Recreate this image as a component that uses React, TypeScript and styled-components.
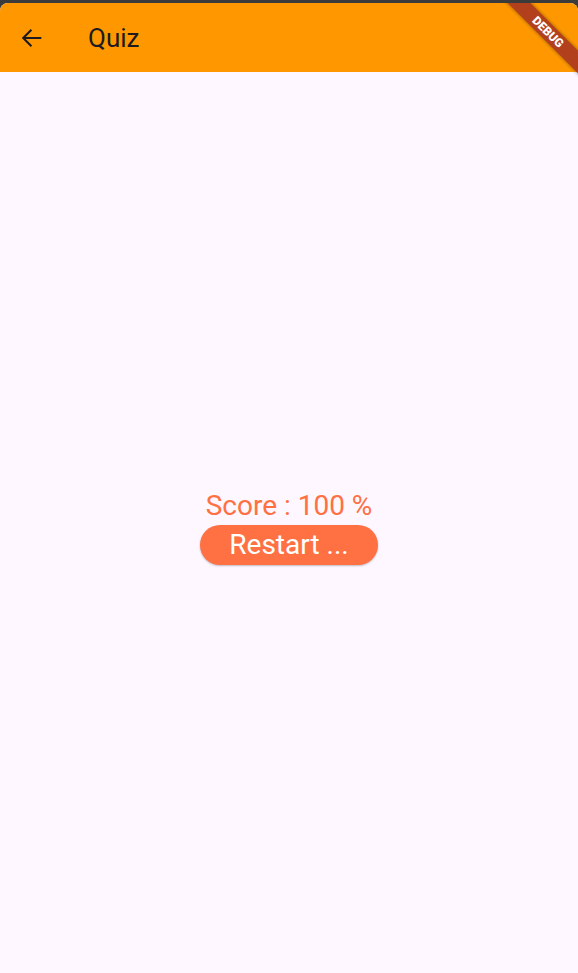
import styled, {createGlobalStyle} from "styled-components";

const Global = createGlobalStyle`
    html, body {
        margin: 0;
        padding: 0;
        background-color: #3b3b3b;
        font-family: Roboto, "Noto Sans", sans-serif;
    }
`;

const Screen = styled.div`
    margin-top: 3px;
    height: 970px;
    background-color: #fef7ff;
    border-radius: 8px 8px 0 0;
    overflow: hidden;
    position: relative;
    display: flex;
    flex-direction: column;
`;

const AppBar = styled.header`
    height: 69px;
    background-color: #ff9800;
    display: flex;
    align-items: center;
    padding: 0 16px 0 18px;
    gap: 42px;
`;

const BackButton = styled.button`
    border: none;
    background: none;
    padding: 0;
    width: 28px;
    height: 28px;
    display: flex;
    align-items: center;
    justify-content: center;
    cursor: pointer;
`;

const Title = styled.h1`
    margin: 0;
    font-size: 26px;
    font-weight: 400;
    color: #1d1b20;
`;

const Body = styled.main`
    flex: 1;
    display: flex;
    flex-direction: column;
    align-items: center;
    justify-content: center;
    padding-top: 9px;
`;

const Score = styled.div`
    font-size: 28px;
    color: #ff7043;
    line-height: 33px;
    margin-bottom: 3px;
`;

const RestartButton = styled.button`
    width: 178px;
    height: 40px;
    border: none;
    border-radius: 20px;
    background-color: #ff7043;
    color: white;
    font-family: Roboto, "Noto Sans", sans-serif;
    font-size: 28px;
    line-height: 40px;
    padding: 0;
    box-shadow: 0 1px 2px rgba(0, 0, 0, 0.25);
    cursor: pointer;
`;

const Banner = styled.div`
    position: absolute;
    top: 21px;
    right: -32px;
    width: 124px;
    height: 16px;
    transform: rotate(45deg);
    background-color: #b3401d;
    box-shadow: 0 0 4px rgba(0, 0, 0, 0.45);
    color: white;
    font-size: 12px;
    font-weight: 900;
    line-height: 16px;
    text-align: center;
`;

function App() {
    return <>
        <Global/>
        <Screen>
            <AppBar>
                <BackButton aria-label="Back">
                    <svg width="28" height="28" viewBox="0 0 24 24" fill="none" stroke="#1d1b20" strokeWidth="1.8">
                        <path d="M20 12H4.5M11.5 5l-7 7 7 7"/>
                    </svg>
                </BackButton>
                <Title>Quiz</Title>
            </AppBar>
            <Body>
                <Score>Score : 100 %</Score>
                <RestartButton>Restart ...</RestartButton>
            </Body>
            <Banner>DEBUG</Banner>
        </Screen>
    </>
}

export default App;
